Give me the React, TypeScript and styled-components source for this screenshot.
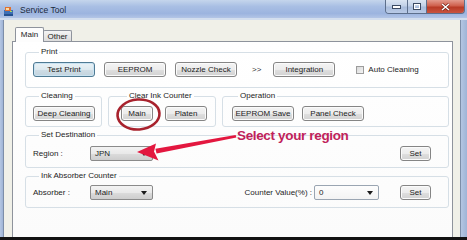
import React from 'react';
import styled, { createGlobalStyle } from 'styled-components';

const Global = createGlobalStyle`
  html, body { margin: 0; padding: 0; background: #111; }
  body { font-family: "Liberation Sans", Arial, sans-serif; }
`;

const Window = styled.div`
  position: relative;
  width: 467px;
  height: 240px;
  overflow: hidden;
  display: flex;
  flex-direction: column;
  background: #aabfdf;
  font-family: "Liberation Sans", Arial, sans-serif;
  font-size: 8px;
  color: #1c1c1c;
`;

const TitleBar = styled.div`
  flex: none;
  height: 20px;
  box-sizing: border-box;
  display: flex;
  align-items: flex-start;
  padding-left: 3px;
  background: linear-gradient(180deg, #c5d5ec 0%, #a9bfe4 35%, #9cb4df 75%, #b3c5e6 100%);
  border-bottom: 2px solid #d3deee;
`;

const AppIcon = styled.svg`
  flex: none;
  margin-top: 6px;
  width: 11px;
  height: 11px;
`;

const TitleText = styled.span`
  margin-left: 6px;
  line-height: 20px;
  font-size: 8.5px;
  color: #1b2a3d;
`;

const Controls = styled.div`
  margin-left: auto;
  margin-right: 2px;
  display: flex;
  height: 13px;
  border: 1px solid #5d6f8c;
  border-top: none;
  border-radius: 0 0 4px 4px;
  overflow: hidden;
`;

const CtrlButton = styled.div<{ $w: number; $close?: boolean }>`
  width: ${(p) => p.$w}px;
  height: 13px;
  display: flex;
  align-items: center;
  justify-content: center;
  & + & { border-left: 1px solid #5d6f8c; }
  background: ${(p) =>
    p.$close
      ? 'linear-gradient(180deg, #e39a8d 0%, #cf5f4c 45%, #b83a26 55%, #c9543f 100%)'
      : 'linear-gradient(180deg, #dbe5f3 0%, #c2d1e8 45%, #a9bcdc 55%, #b9cae6 100%)'};
`;

const Body = styled.div`
  flex: 1;
  display: flex;
  min-height: 0;
`;

const SideFrame = styled.div<{ $w: number; $left?: boolean }>`
  flex: none;
  width: ${(p) => p.$w}px;
  background: linear-gradient(90deg, #b4c6e2, #9fb4d6);
  ${(p) => (p.$left ? 'border-right: 1px solid #7d8ea8;' : 'border-left: 1px solid #7d8ea8;')}
  box-sizing: border-box;
`;

const Client = styled.div`
  flex: 1;
  display: flex;
  flex-direction: column;
  background: #f0f0e8;
  padding: 7px 7px 0 8px;
  min-width: 0;
`;

const TabStrip = styled.div`
  flex: none;
  height: 14px;
  display: flex;
  align-items: flex-end;
  padding-left: 3px;
`;

const Tab = styled.div<{ $active?: boolean; $w: number }>`
  position: relative;
  box-sizing: border-box;
  width: ${(p) => p.$w}px;
  height: ${(p) => (p.$active ? 15 : 11)}px;
  margin-bottom: ${(p) => (p.$active ? -1 : 0)}px;
  margin-left: ${(p) => (p.$active ? 0 : -1)}px;
  z-index: ${(p) => (p.$active ? 2 : 1)};
  border: 1px solid #8e939c;
  border-bottom: none;
  border-radius: 2px 2px 0 0;
  background: ${(p) => (p.$active ? '#fdfdfd' : 'linear-gradient(180deg, #f4f4f4, #dcdcdc)')};
  display: flex;
  align-items: center;
  justify-content: center;
  font-size: 8px;
  padding-bottom: ${(p) => (p.$active ? 1 : 0)}px;
`;

const Panel = styled.div`
  flex: 1;
  border: 1px solid #8e939c;
  border-bottom: none;
  background: linear-gradient(180deg, #ffffff, #fbfbfb);
  padding: 5px 3px 0 12px;
  display: flex;
  flex-direction: column;
  align-items: stretch;
  gap: 3px;
  min-height: 0;
`;

const Group = styled.fieldset<{ $pt: number; $pb: number; $pl: number; $pr?: number; $w?: number; $grow?: boolean }>`
  margin: 0;
  min-width: 0;
  box-sizing: border-box;
  border: 1px solid #d6dfe6;
  border-radius: 3px;
  padding: ${(p) => `${p.$pt}px ${p.$pr ?? 8}px ${p.$pb}px ${p.$pl}px`};
  flex: ${(p) => (p.$grow ? '1 1 0' : 'none')};
  ${(p) => (p.$w ? `width: ${p.$w}px;` : '')}
`;

const Legend = styled.legend`
  padding: 0 2px;
  margin-left: 6px;
  line-height: 10px;
  font-size: 8px;
  color: #1c1c1c;
`;

const Row = styled.div<{ $gap?: number }>`
  display: flex;
  align-items: center;
  height: 15px;
  gap: ${(p) => p.$gap ?? 0}px;
`;

const GroupRow = styled.div`
  flex: none;
  display: flex;
  gap: 6px;
`;

const Button = styled.div<{ $w: number; $primary?: boolean; $ml?: number }>`
  flex: none;
  box-sizing: border-box;
  width: ${(p) => p.$w}px;
  height: 15px;
  margin-left: ${(p) => p.$ml ?? 0}px;
  display: flex;
  align-items: center;
  justify-content: center;
  border: 1px solid ${(p) => (p.$primary ? '#4f7a93' : '#858585')};
  border-radius: 3px;
  box-shadow: inset 0 0 0 1px ${(p) => (p.$primary ? '#c9e3f2' : '#fbfbfb')};
  background: ${(p) =>
    p.$primary
      ? 'linear-gradient(180deg, #eaf2f6 0%, #dde9ef 50%, #cfdde6 51%, #c3d3dd 100%)'
      : 'linear-gradient(180deg, #f4f4f4 0%, #ececec 50%, #dfdfdf 51%, #d2d2d2 100%)'};
  font-size: 8px;
  color: #1c1c1c;
  white-space: nowrap;
`;

const Chevron = styled.span`
  padding: 0 3px 0 6px;
  font-size: 8px;
  color: #333;
`;

const CheckLabel = styled.label`
  display: flex;
  align-items: center;
  gap: 4px;
  margin-left: 12px;
  font-size: 8px;
`;

const CheckBox = styled.span`
  width: 8px;
  height: 8px;
  box-sizing: border-box;
  border: 1px solid #9c9c9c;
  background: linear-gradient(135deg, #d8d8d8, #f4f4f4);
`;

const FieldLabel = styled.span<{ $w?: number }>`
  flex: none;
  ${(p) => (p.$w ? `width: ${p.$w}px;` : '')}
  font-size: 8px;
  white-space: nowrap;
`;

const Spacer = styled.div`
  flex: 1;
`;

const Select = styled.div<{ $w: number; $light?: boolean; $ml?: number }>`
  flex: none;
  position: relative;
  box-sizing: border-box;
  width: ${(p) => p.$w}px;
  height: 15px;
  margin-left: ${(p) => p.$ml ?? 0}px;
  border: 1px solid ${(p) => (p.$light ? '#9aa5b2' : '#8a8a8a')};
  border-radius: 2px;
  background: ${(p) =>
    p.$light
      ? 'linear-gradient(180deg, #fdfdfd 0%, #f3f3f3 100%)'
      : 'linear-gradient(180deg, #f3f3f3 0%, #e9e9e9 50%, #dcdcdc 51%, #cdcdcd 100%)'};
  display: flex;
  align-items: center;
  padding-left: 4px;
  font-size: 8px;
`;

const Caret = styled.span`
  position: absolute;
  right: 5px;
  top: 5px;
  width: 0;
  height: 0;
  border-left: 3px solid transparent;
  border-right: 3px solid transparent;
  border-top: 4px solid #1a1a1a;
`;

const BottomBar = styled.div`
  flex: none;
  height: 3px;
  background: #121212;
`;

const Overlay = styled.svg`
  position: absolute;
  left: 0;
  top: 0;
  width: 467px;
  height: 240px;
  pointer-events: none;
`;

const Callout = styled.div`
  position: absolute;
  left: 237px;
  top: 128px;
  font-family: "Liberation Sans", Arial, sans-serif;
  font-weight: bold;
  font-size: 13.5px;
  line-height: 15px;
  letter-spacing: -0.35px;
  color: #c0225a;
  white-space: nowrap;
`;

export default function App() {
  return (
    <>
      <Global />
      <Window>
        <TitleBar>
          <AppIcon viewBox="0 0 11 11">
            <rect x="1" y="4" width="9" height="5" fill="#3f6fb5" />
            <rect x="2" y="1" width="6" height="4" fill="#e0712f" />
            <rect x="3" y="2" width="3" height="2" fill="#f6d9a6" />
            <rect x="1" y="8" width="9" height="2" fill="#25508f" />
            <rect x="7" y="5" width="2" height="1" fill="#9ee06a" />
          </AppIcon>
          <TitleText>Service Tool</TitleText>
          <Controls>
            <CtrlButton $w={21}>
              <svg width="9" height="4" viewBox="0 0 9 4">
                <rect x="0.5" y="0.5" width="8" height="3" fill="#fff" stroke="#3b4a63" />
              </svg>
            </CtrlButton>
            <CtrlButton $w={18}>
              <svg width="8" height="7" viewBox="0 0 8 7">
                <rect x="0.5" y="0.5" width="7" height="6" fill="none" stroke="#3b4a63" />
                <rect x="1.5" y="1.5" width="5" height="4" fill="none" stroke="#fff" />
              </svg>
            </CtrlButton>
            <CtrlButton $w={37} $close>
              <svg width="9" height="8" viewBox="0 0 9 8">
                <path d="M1 1 L8 7 M8 1 L1 7" stroke="#6b1d12" strokeWidth="2.6" />
                <path d="M1 1 L8 7 M8 1 L1 7" stroke="#fff" strokeWidth="1.5" />
              </svg>
            </CtrlButton>
          </Controls>
        </TitleBar>
        <Body>
          <SideFrame $w={4} $left />
          <Client>
            <TabStrip>
              <Tab $active $w={29}>Main</Tab>
              <Tab $w={29}>Other</Tab>
            </TabStrip>
            <Panel>
              <Group $pt={5} $pb={10} $pl={7}>
                <Legend>Print</Legend>
                <Row $gap={9}>
                  <Button $w={62} $primary>Test Print</Button>
                  <Button $w={62}>EEPROM</Button>
                  <Button $w={62}>Nozzle Check</Button>
                  <Chevron>&gt;&gt;</Chevron>
                  <Button $w={62}>Integration</Button>
                  <CheckLabel>
                    <CheckBox />
                    Auto Cleaning
                  </CheckLabel>
                </Row>
              </Group>
              <GroupRow>
                <Group $w={77} $pt={5} $pb={5} $pl={7}>
                  <Legend>Cleaning</Legend>
                  <Row>
                    <Button $w={62}>Deep Cleaning</Button>
                  </Row>
                </Group>
                <Group $w={108} $pt={5} $pb={5} $pl={12}>
                  <Legend>Clear Ink Counter</Legend>
                  <Row $gap={12}>
                    <Button $w={32}>Main</Button>
                    <Button $w={42}>Platen</Button>
                  </Row>
                </Group>
                <Group $grow $pt={5} $pb={5} $pl={9}>
                  <Legend>Operation</Legend>
                  <Row $gap={8}>
                    <Button $w={62}>EEPROM Save</Button>
                    <Button $w={62}>Panel Check</Button>
                  </Row>
                </Group>
              </GroupRow>
              <Group $pt={6} $pb={6} $pl={7} $pr={17}>
                <Legend>Set Destination</Legend>
                <Row>
                  <FieldLabel $w={57}>Region :</FieldLabel>
                  <Select $w={63}>
                    JPN
                    <Caret />
                  </Select>
                  <Spacer />
                  <Button $w={31}>Set</Button>
                </Row>
              </Group>
              <Group $pt={4} $pb={7} $pl={7} $pr={17}>
                <Legend>Ink Absorber Counter</Legend>
                <Row>
                  <FieldLabel $w={57}>Absorber :</FieldLabel>
                  <Select $w={63}>
                    Main
                    <Caret />
                  </Select>
                  <Spacer />
                  <FieldLabel>Counter Value(%) :</FieldLabel>
                  <Select $w={65} $ml={2} $light>
                    0
                    <Caret />
                  </Select>
                  <Button $w={31} $ml={21}>Set</Button>
                </Row>
              </Group>
            </Panel>
          </Client>
          <SideFrame $w={7} />
        </Body>
        <BottomBar />
        <Overlay viewBox="0 0 467 240">
          <ellipse cx="138.5" cy="114.5" rx="21" ry="15" fill="none" stroke="#a8222d" strokeWidth="2.6" transform="rotate(-4 138.5 114.5)" />
          <path d="M235.6 135 L236.4 137.4 L156.6 153.4 L155.4 148.8 Z" fill="#e3173f" />
          <path d="M137 152 L156 143.5 L154 151.5 L158.5 160.5 Z" fill="#e3173f" />
        </Overlay>
        <Callout>Select your region</Callout>
      </Window>
    </>
  );
}
